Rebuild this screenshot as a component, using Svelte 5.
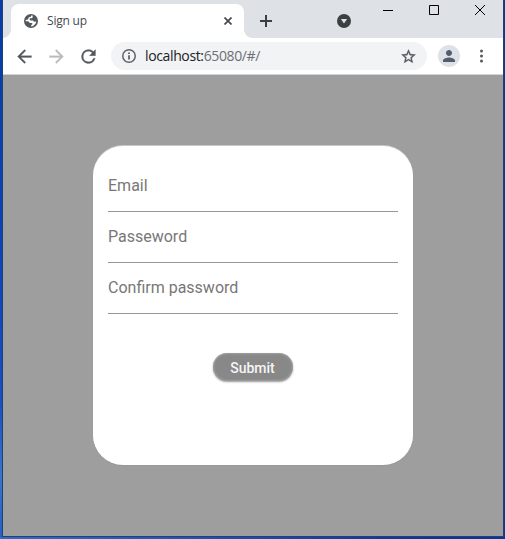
<script>
  const fields = [
    { label: 'Email', type: 'email' },
    { label: 'Passeword', type: 'password' },
    { label: 'Confirm password', type: 'password' }
  ];
</script>

<div class="desktop">
  <div class="window">
    <header class="strip">
      <div class="tab">
        <svg class="globe" width="14" height="14" viewBox="0 0 14 14"><circle cx="7" cy="7" r="7" /><path d="M8.600 1.400L8.800 3.200 7.600 4.200H5.900L5.500 5.600 6.600 6.500H9L10 7.700 12.300 7.600C12 10.200 9.800 12.300 7.200 12.500L7.300 11 8.600 9.900 7.900 8.900H5.900L4.200 7.200H1.600L1.700 5.900 3.800 5.400 5 3.300 6.800 2.800 7.200 1.400Z" /></svg>
        <span class="title">Sign up</span>
        <svg class="close" width="8" height="8" viewBox="0 0 8 8"><path d="M.5.5l7 7M7.500.5l-7 7" /></svg>
      </div>
      <svg class="plus" width="12" height="12" viewBox="0 0 12 12"><path d="M6 0v12M0 6h12" /></svg>
      <svg class="search" width="14" height="14" viewBox="0 0 14 14"><circle cx="7" cy="7" r="7" /><path d="M3.900 5h6.200L7 9.600z" /></svg>
      <div class="controls">
        <svg width="10" height="10" viewBox="0 0 10 10"><path d="M0 5.500h10" /></svg>
        <svg width="10" height="10" viewBox="0 0 10 10"><path d="M.5.5h9v9h-9z" /></svg>
        <svg width="10" height="10" viewBox="0 0 10 10"><path d="M0 0l10 10M10 0L0 10" /></svg>
      </div>
    </header>
    <nav class="toolbar">
      <svg class="icon" width="21" height="21" viewBox="0 0 24 24"><path d="M20 11H7.830l5.590-5.590L12 4l-8 8 8 8 1.410-1.410L7.830 13H20v-2z" /></svg>
      <svg class="icon faded" width="21" height="21" viewBox="0 0 24 24"><path d="M12 4l-1.410 1.410L16.170 11H4v2h12.170l-5.580 5.590L12 20l8-8z" /></svg>
      <svg class="icon" width="21" height="21" viewBox="0 0 24 24"><path d="M17.650 6.350A7.958 7.958 0 0 0 12 4a8 8 0 1 0 7.730 10h-2.080A6 6 0 1 1 12 6c1.660 0 3.140.69 4.220 1.780L13 11h7V4l-2.350 2.350z" /></svg>
      <div class="address">
        <svg class="info" width="14" height="14" viewBox="0 0 14 14"><circle cx="7" cy="7" r="6.250" /><path d="M7 6.200v4.300M7 3.500v1.500" /></svg>
        <span class="url">localhost:<span>65080/#/</span></span>
        <svg class="star" width="17" height="17" viewBox="0 0 24 24"><path d="M22 9.240l-7.190-.62L12 2 9.190 8.630 2 9.240l5.460 4.730L5.820 21 12 17.270 18.180 21l-1.630-7.030L22 9.240zM12 15.400l-3.760 2.270 1-4.280-3.320-2.880 4.380-.38L12 6.100l1.710 4.040 4.380.38-3.320 2.880 1 4.280L12 15.400z" /></svg>
      </div>
      <div class="avatar">
        <svg width="18" height="18" viewBox="0 0 24 24"><path d="M12 12c2.210 0 4-1.790 4-4s-1.790-4-4-4-4 1.790-4 4 1.790 4 4 4zm0 2c-2.670 0-8 1.340-8 4v2h16v-2c0-2.660-5.330-4-8-4z" /></svg>
      </div>
      <svg class="menu" width="5" height="14" viewBox="0 0 5 14"><circle cx="2.500" cy="2" r="1.500" /><circle cx="2.500" cy="7" r="1.500" /><circle cx="2.500" cy="12" r="1.500" /></svg>
    </nav>
    <main>
      <form onsubmit={(e) => e.preventDefault()}>
        {#each fields as field}
          <input type={field.type} placeholder={field.label} aria-label={field.label} />
        {/each}
        <button>Submit</button>
      </form>
    </main>
  </div>
</div>

<style>
  .desktop {
    box-sizing: border-box;
    width: 505px;
    height: 539px;
    padding: 0 1px 2px 2px;
    overflow: hidden;
    background: linear-gradient(90deg, #2f6ccc, #0636a0 85%) 0 100% / 100% 2px no-repeat,
      linear-gradient(90deg, transparent 502px, #063a98 502px),
      linear-gradient(#063ba8, #0a44bc 45%, #1650c4 75%, #3a74cc 88%, #245fc6);
    font-family: 'Open Sans', sans-serif;
  }
  .window {
    box-sizing: border-box;
    display: flex;
    flex-direction: column;
    width: 502px;
    height: 537px;
    border: 1px solid #24406f;
    border-top: 0;
    background: #fff;
  }
  svg { display: block; flex: none; }
  .strip {
    display: flex;
    align-items: flex-start;
    height: 38px;
    background: #dee1e6;
  }
  .tab {
    position: relative;
    box-sizing: border-box;
    display: flex;
    align-items: center;
    width: 233px;
    height: 34px;
    margin: 4px 0 0 8px;
    padding: 0 12px 0 13px;
    border-radius: 8px 8px 0 0;
    background: #fff;
  }
  .tab::before, .tab::after {
    content: '';
    position: absolute;
    bottom: 0;
    width: 8px;
    height: 8px;
  }
  .tab::before { left: -8px; background: radial-gradient(circle at 0 0, transparent 7.5px, #fff 8px); }
  .tab::after { right: -8px; background: radial-gradient(circle at 100% 0, transparent 7.5px, #fff 8px); }
  .globe { fill: #54585d; }
  .globe path { fill: #fff; }
  .title {
    margin-left: 9px;
    font-size: 12px;
    letter-spacing: -0.2px;
    line-height: 18px;
    color: #45484d;
  }
  .close { margin-left: auto; stroke: #45494d; stroke-width: 1.7; }
  .plus { margin: 15px 0 0 16px; stroke: #3c4043; stroke-width: 2; }
  .search { margin: 14px 0 0 65px; fill: #3c4043; }
  .search path { fill: #dee1e6; }
  .controls {
    display: flex;
    gap: 36px;
    margin: 5px 0 0 32px;
    fill: none;
    stroke: #000;
  }
  .toolbar {
    display: flex;
    align-items: center;
    height: 36px;
    padding-left: 11px;
    border-bottom: 1px solid #d2d3d5;
  }
  .icon { margin-right: 11px; fill: #54585d; stroke: #54585d; stroke-width: 0.3; }
  .faded { fill: #b9bbbd; stroke: #b9bbbd; }
  .address {
    box-sizing: border-box;
    display: flex;
    align-items: center;
    width: 316px;
    height: 28px;
    margin-left: 1px;
    padding: 0 10px 0 11px;
    border-radius: 14px;
    background: #f1f3f4;
  }
  .info { fill: none; stroke: #5f6368; stroke-width: 1.5; }
  .info path { stroke-width: 1.8; }
  .url {
    margin-left: 9px;
    font-size: 14px;
    letter-spacing: -0.37px;
    line-height: 20px;
    color: #202124;
  }
  .url span { color: #6b6f74; }
  .star { margin-left: auto; fill: #54585d; stroke: #54585d; stroke-width: 0.4; }
  .avatar {
    display: flex;
    align-items: center;
    justify-content: center;
    width: 22px;
    height: 22px;
    margin: 0 19px 0 11px;
    border-radius: 50%;
    background: #dee1e6;
  }
  .avatar svg { fill: #515c70; }
  .menu { fill: #54585d; }
  main {
    display: flex;
    flex: 1;
    align-items: flex-start;
    background: #9e9e9e;
  }
  form {
    box-sizing: border-box;
    display: flex;
    flex-direction: column;
    align-items: center;
    width: 320px;
    height: 319px;
    margin: 71px 0 0 90px;
    padding: 15px 15px 0;
    border-radius: 30px;
    background: #fff;
    box-shadow: 0 -1px 0 #c8c8c8, 0 1px 0 #989898;
  }
  input {
    box-sizing: border-box;
    width: 290px;
    height: 51px;
    padding: 0 0 1px;
    border: 0;
    border-bottom: 1px solid #979797;
    outline: 0;
    background: transparent;
    font: 16px Roboto, sans-serif;
  }
  input::placeholder { color: #777; opacity: 1; }
  button {
    width: 80px;
    height: 28px;
    margin-top: 39px;
    padding: 1px 1px 0 0;
    border: 0;
    border-radius: 14px;
    background: #888;
    box-shadow: inset 0 0 2px 1px rgba(255, 255, 255, 0.2), 0 1px 2px rgba(0, 0, 0, 0.4);
    color: #f5f5f5;
    font: 500 14px Roboto, sans-serif;
    letter-spacing: -0.05px;
  }
</style>
